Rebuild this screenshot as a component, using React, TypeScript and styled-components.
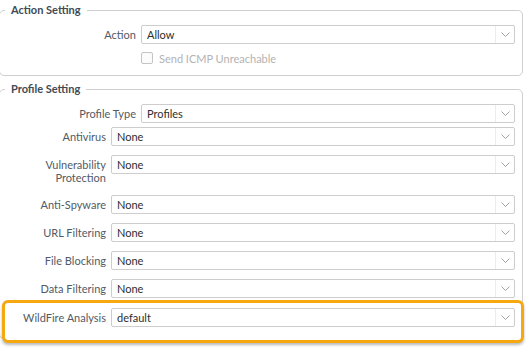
import styled, { createGlobalStyle } from "styled-components";

const GlobalStyle = createGlobalStyle`
  body {
    margin: 0;
    background: #ffffff;
    font-family: Lato, "Open Sans", sans-serif;
    overflow: hidden;
  }
`;

const Page = styled.div`
  width: 526px;
  height: 358px;
  padding-top: 2px;
  box-sizing: border-box;
`;

const Fieldset = styled.fieldset<{ $gap?: number; $bottom?: number }>`
  margin: ${(p) => p.$gap ?? 0}px 3px 0 -1px;
  padding: 7px 7px ${(p) => p.$bottom ?? 11}px 0;
  border: 1px solid #cfcfcf;
  border-radius: 5px;
  min-width: 0;
`;

const Legend = styled.legend`
  margin-left: 5px;
  padding: 0 6px;
  font-size: 11px;
  line-height: 16px;
  font-weight: 700;
  color: #414a55;
`;

const Row = styled.div<{ $labelWidth: number }>`
  display: grid;
  grid-template-columns: ${(p) => p.$labelWidth}px 1fr;
  column-gap: 5px;
  align-items: start;
`;

const Label = styled.div`
  text-align: right;
  font-size: 11px;
  line-height: 13px;
  padding: 3px 0 2px;
  color: #525a66;
`;

const LabelLine = styled.div`
  height: 13px;
`;

const SelectBox = styled.div`
  display: flex;
  height: 19px;
  box-sizing: border-box;
  border: 1px solid #cdcdcd;
  border-radius: 2px;
  background: #ffffff;
`;

const SelectValue = styled.div`
  flex: 1;
  padding-left: 5px;
  font-size: 11px;
  line-height: 17px;
  color: #2e2e2e;
`;

const Caret = styled.div`
  width: 18px;
  border-left: 1px solid #ececec;
  display: flex;
  align-items: center;
  justify-content: center;
`;

const CheckRow = styled.div`
  grid-column: 2;
  display: flex;
  align-items: center;
  margin-top: 8px;
  height: 12px;
`;

const CheckBox = styled.span`
  width: 12px;
  height: 12px;
  box-sizing: border-box;
  border: 1px solid #c4c4c4;
  border-radius: 2px;
  background: #fbfbfb;
`;

const CheckText = styled.span`
  margin-left: 6px;
  font-size: 11px;
  color: #b3b3b3;
`;

const SubList = styled.div`
  display: flex;
  flex-direction: column;
  gap: 9px;
  margin-top: 4px;
`;

const Highlight = styled.div`
  margin: -7px -9px -5px 2px;
  padding: 5px 6px 13px 0;
  border: 3px solid #f5a810;
  border-radius: 6px;
  background: #ffffff;
  box-shadow: 0 2px 3px rgba(0, 0, 0, 0.28);
`;

const Chevron = () => (
  <svg width="9" height="5" viewBox="0 0 9 5">
    <polyline points="0.5,0.5 4.5,4.5 8.5,0.5" fill="none" stroke="#999999" strokeWidth="0.9" />
  </svg>
);

const Select = ({ value }: { value: string }) => (
  <SelectBox>
    <SelectValue>{value}</SelectValue>
    <Caret>
      <Chevron />
    </Caret>
  </SelectBox>
);

const profiles = [
  { label: ["Antivirus"], value: "None" },
  { label: ["Vulnerability", "Protection"], value: "None" },
  { label: ["Anti-Spyware"], value: "None" },
  { label: ["URL Filtering"], value: "None" },
  { label: ["File Blocking"], value: "None" },
  { label: ["Data Filtering"], value: "None" },
];

export default function App() {
  return (
    <Page>
      <GlobalStyle />
      <Fieldset>
        <Legend>Action Setting</Legend>
        <Row $labelWidth={136}>
          <Label>Action</Label>
          <Select value="Allow" />
          <CheckRow>
            <CheckBox />
            <CheckText>Send ICMP Unreachable</CheckText>
          </CheckRow>
        </Row>
      </Fieldset>
      <Fieldset $gap={5} $bottom={0}>
        <Legend>Profile Setting</Legend>
        <Row $labelWidth={136}>
          <Label>Profile Type</Label>
          <Select value="Profiles" />
        </Row>
        <SubList>
          {profiles.map((p) => (
            <Row key={p.label.join(" ")} $labelWidth={106}>
              <Label>
                {p.label.map((line) => (
                  <LabelLine key={line}>{line}</LabelLine>
                ))}
              </Label>
              <Select value={p.value} />
            </Row>
          ))}
          <Highlight>
            <Row $labelWidth={101}>
              <Label>WildFire Analysis</Label>
              <Select value="default" />
            </Row>
          </Highlight>
        </SubList>
      </Fieldset>
    </Page>
  );
}
